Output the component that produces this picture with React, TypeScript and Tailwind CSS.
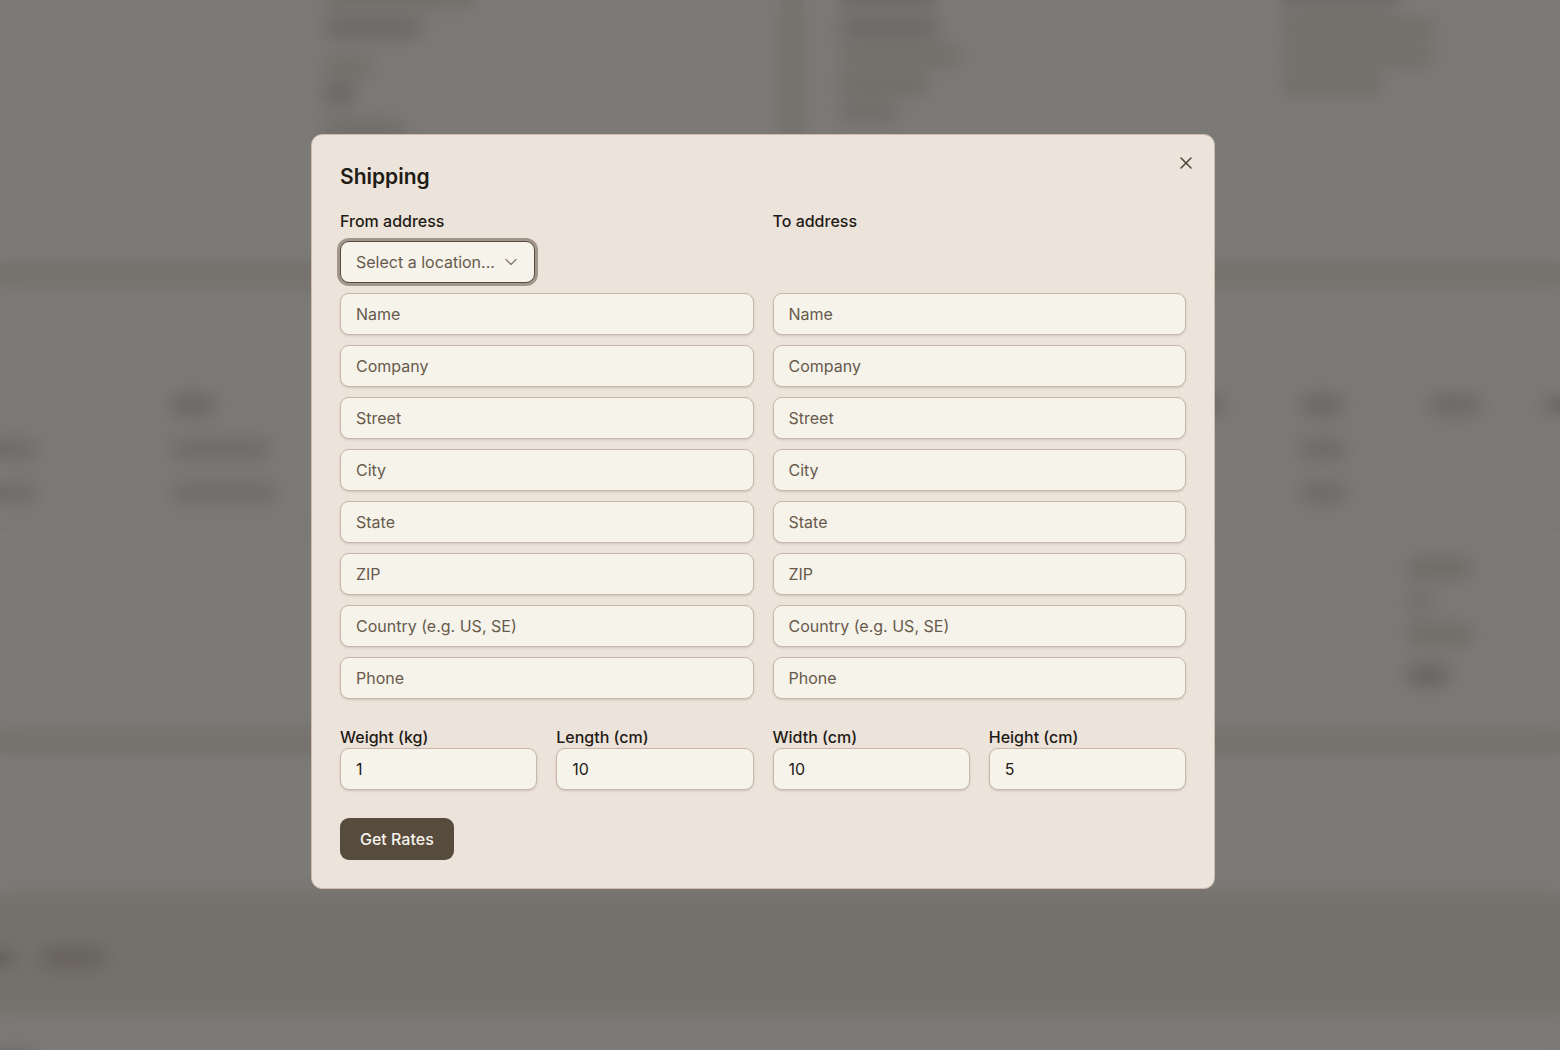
import React, { useState } from "react";
import { ChevronDown, X } from "lucide-react";
import clsx from "clsx";

interface Field {
	key: string;
	placeholder: string;
}

interface AddressColumnProps {
	id: string;
	title: string;
	children?: React.ReactNode;
}

const addressFields: Field[] = [
	{ key: "name", placeholder: "Name" },
	{ key: "company", placeholder: "Company" },
	{ key: "street", placeholder: "Street" },
	{ key: "city", placeholder: "City" },
	{ key: "state", placeholder: "State" },
	{ key: "zip", placeholder: "ZIP" },
	{ key: "country", placeholder: "Country (e.g. US, SE)" },
	{ key: "phone", placeholder: "Phone" },
];

const parcelFields = [
	{ key: "weight", label: "Weight (kg)", value: "1" },
	{ key: "length", label: "Length (cm)", value: "10" },
	{ key: "width", label: "Width (cm)", value: "10" },
	{ key: "height", label: "Height (cm)", value: "5" },
];

const inputClass =
	"block h-[42px] w-full rounded-[9px] border border-[#c9b8aa] bg-[#f6f3eb] px-[15px] text-base text-[#1f1b16] shadow-sm outline-none placeholder:text-[#675a4b]";

const Line = ({ className }: { className: string }) => (
	<div
		className={clsx("h-4 shrink-0 rounded-sm opacity-80 blur-[5px]", className)}
	/>
);

const AddressColumn = ({ id, title, children }: AddressColumnProps) => (
	<fieldset className="flex min-w-0 flex-col gap-2.5">
		<legend className="mb-2.5 text-base leading-5 font-medium">{title}</legend>
		<div className="h-[42px]">{children}</div>
		{addressFields.map(({ key, placeholder }) => (
			<input
				key={key}
				id={`${id}-${key}`}
				type="text"
				aria-label={`${title} ${placeholder}`}
				placeholder={placeholder}
				className={inputClass}
			/>
		))}
	</fieldset>
);

// Order page that sits under the dialog
const OrderPage = () => (
	<div
		aria-hidden="true"
		className="flex h-screen flex-col gap-6 overflow-hidden bg-[#eae2d9]"
	>
		<div className="flex h-[263px] shrink-0 gap-6">
			<div className="flex w-1/2 flex-col gap-4 bg-[#f7f4ed] pl-[325px]">
				<Line className="-mt-2 -mb-1 w-[150px] bg-[#ddd2c7]" />
				<Line className="w-24 bg-[#c1bdb4]" />
				<Line className="mt-1.5 w-12 bg-[#ddd2c7]" />
				<Line className="-mt-1 w-7 bg-[#b1ada4]" />
				<Line className="mt-1 w-20 bg-[#d5cabf]" />
			</div>
			<div className="grid flex-1 grid-cols-[442px_1fr] bg-[#f7f4ed] pl-9">
				<div className="flex flex-col gap-3">
					<Line className="-mt-2 w-24 bg-[#cfc9c0]" />
					<Line className="w-[98px] bg-[#c1bdb4]" />
					<Line className="w-[122px] bg-[#dacfc5]" />
					<Line className="w-[88px] bg-[#d5c9bf]" />
					<Line className="w-[58px] bg-[#d3ccc3]" />
				</div>
				<div className="flex flex-col gap-3">
					<Line className="-mt-2 w-[116px] bg-[#cfc9c0]" />
					<Line className="w-[152px] bg-[#d9cec4]" />
					<Line className="w-[152px] bg-[#d9cec4]" />
					<Line className="w-[100px] bg-[#d7ccc2]" />
				</div>
			</div>
		</div>

		<div className="h-[442px] shrink-0 bg-[#f7f4ed] pt-[110px]">
			<div className="flex flex-col gap-7">
				<div className="flex justify-between">
					<Line className="ml-[172px] w-[42px] bg-[#b9b5ac]" />
					<div className="flex w-[354px] gap-[88px]">
						<Line className="-mr-2 w-4 bg-[#b1ada4]" />
						<Line className="w-10 bg-[#b9b5ac]" />
						<Line className="w-[50px] bg-[#c1bdb4]" />
						<Line className="-ml-6 w-10 bg-[#c1bdb4]" />
					</div>
				</div>
				<div className="flex">
					<Line className="-ml-6 w-15 bg-[#cbc7be]" />
					<Line className="ml-[136px] w-[98px] bg-[#cbc7be]" />
					<Line className="mr-[215px] ml-auto w-11 bg-[#c5c1b8]" />
				</div>
				<div className="flex">
					<Line className="-ml-6 w-15 bg-[#cbc7be]" />
					<Line className="ml-[136px] w-[104px] bg-[#cbc7be]" />
					<Line className="mr-[215px] ml-auto w-11 bg-[#c5c1b8]" />
				</div>
			</div>
			<div className="mt-7 h-px bg-[#e4dcd2]" />
			<div className="mt-[30px] ml-auto flex w-[152px] flex-col gap-[17px]">
				<Line className="w-[62px] bg-[#cdc2b8]" />
				<Line className="w-6 bg-[#d3cbc1]" />
				<Line className="w-16 bg-[#d1c6bb]" />
				<Line className="mt-2 w-10 bg-[#adaaa0]" />
			</div>
		</div>

		<div className="h-[139px] shrink-0 bg-[#f7f4ed]" />

		<div className="flex h-[75px] shrink-0 items-center gap-7 pt-2">
			<Line className="-ml-6 w-[38px] bg-[#b9b3aa]" />
			<Line className="w-[63px] bg-[#b9aea4]" />
		</div>

		<div className="flex-1 bg-[#f7f4ed] pt-8">
			<Line className="w-8 bg-[#cbc4ba]" />
		</div>
	</div>
);

const App = () => {
	const [open, setOpen] = useState(true);
	const [parcel, setParcel] = useState<Record<string, string>>(
		Object.fromEntries(parcelFields.map(({ key, value }) => [key, value]))
	);

	return (
		<div className="font-['Inter','Liberation_Sans',sans-serif] text-[#1f1b16]">
			<OrderPage />

			{open && (
				<div className="fixed inset-0 flex items-center justify-center bg-black/50 pr-[34px] pb-[27px] backdrop-blur-[9px]">
					<div
						role="dialog"
						aria-modal="true"
						aria-labelledby="shipping-title"
						className="relative w-full max-w-[904px] rounded-[11px] border border-[#cdbcae] bg-[#ece3da] p-7"
					>
						<button
							type="button"
							aria-label="Close"
							onClick={() => setOpen(false)}
							className="absolute top-[18px] right-[18px] text-[#4d4237]"
						>
							<X size={20} strokeWidth={1.75} />
						</button>

						<h2
							id="shipping-title"
							className="mb-5 text-[21px] leading-7 font-semibold"
						>
							Shipping
						</h2>

						<form
							className="flex flex-col gap-7"
							onSubmit={(e) => e.preventDefault()}
						>
							<div className="grid grid-cols-2 gap-[19px]">
								<AddressColumn id="from" title="From address">
									<div className="relative w-[195px]">
										<select
											aria-label="From location"
											defaultValue=""
											className="block h-[42px] w-full appearance-none rounded-[9px] border border-[#574b3e] bg-[#f6f3eb] pr-9 pl-[15px] text-base text-[#675a4b] ring-3 ring-[#a1968b] outline-none"
										>
											<option value="">Select a location...</option>
										</select>
										<ChevronDown
											size={20}
											strokeWidth={1.5}
											className="pointer-events-none absolute top-[11px] right-3.5 text-[#867a6d]"
										/>
									</div>
								</AddressColumn>
								<AddressColumn id="to" title="To address" />
							</div>

							<div className="grid grid-cols-4 gap-[19px]">
								{parcelFields.map(({ key, label }) => (
									<div key={key}>
										<label
											htmlFor={key}
											className="block text-base leading-[21px] font-medium"
										>
											{label}
										</label>
										<input
											id={key}
											type="number"
											value={parcel[key]}
											onChange={(e) =>
												setParcel((prev) => ({ ...prev, [key]: e.target.value }))
											}
											className={inputClass}
										/>
									</div>
								))}
							</div>

							<button
								type="submit"
								className="h-[42px] self-start rounded-[9px] bg-[#574b3e] px-5 text-base font-medium text-[#f6f3eb]"
							>
								Get Rates
							</button>
						</form>
					</div>
				</div>
			)}
		</div>
	);
};

export default App;
